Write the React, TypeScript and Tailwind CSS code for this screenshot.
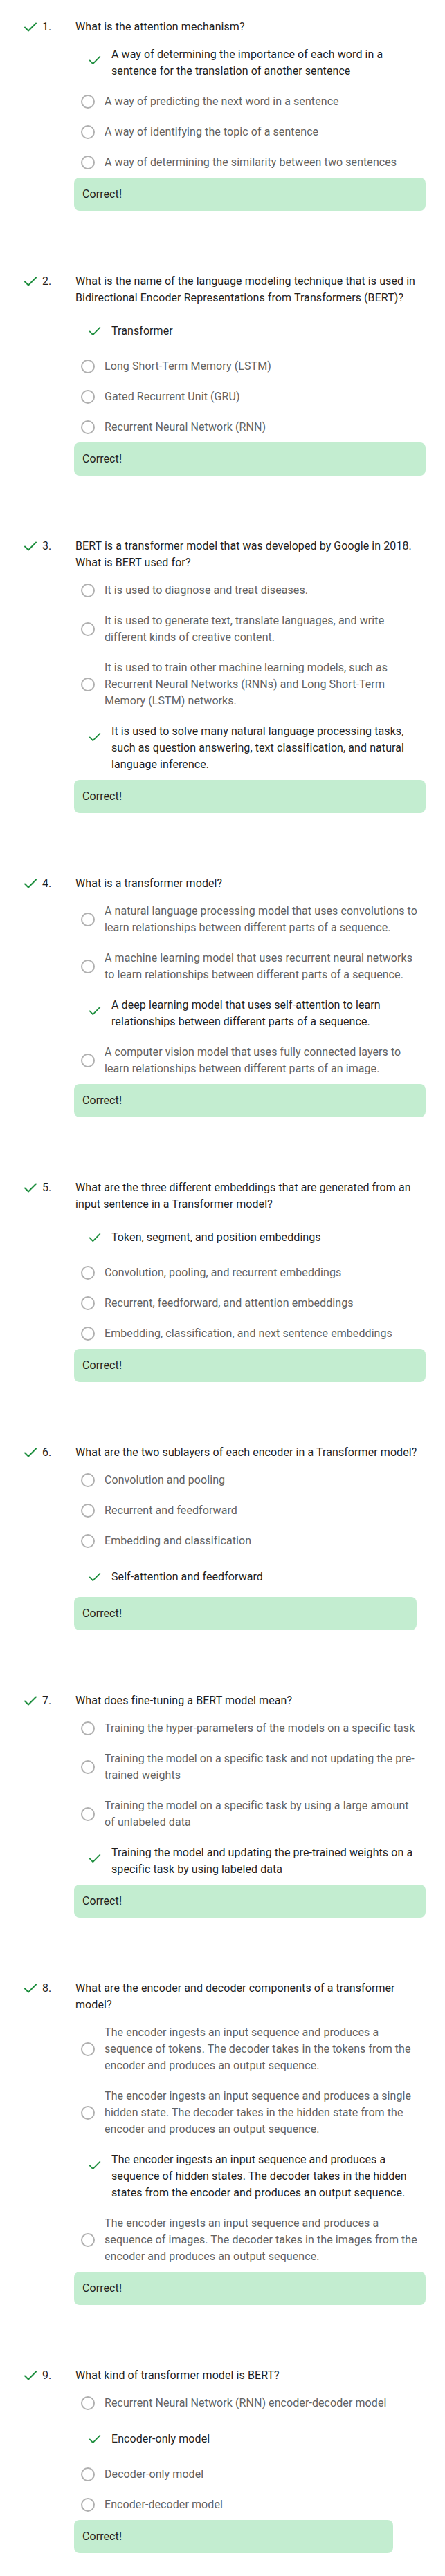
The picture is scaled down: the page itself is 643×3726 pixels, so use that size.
import React from "react";

type Opt = { text: string; correct?: boolean };
type Q = { title: string; options: Opt[] };

const questions: Q[] = [
  {
    title: "What is the attention mechanism?",
    options: [
      { text: "A way of determining the importance of each word in a sentence for the translation of another sentence", correct: true },
      { text: "A way of predicting the next word in a sentence" },
      { text: "A way of identifying the topic of a sentence" },
      { text: "A way of determining the similarity between two sentences" },
    ],
  },
  {
    title: "What is the name of the language modeling technique that is used in Bidirectional Encoder Representations from Transformers (BERT)?",
    options: [
      { text: "Transformer", correct: true },
      { text: "Long Short-Term Memory (LSTM)" },
      { text: "Gated Recurrent Unit (GRU)" },
      { text: "Recurrent Neural Network (RNN)" },
    ],
  },
  {
    title: "BERT is a transformer model that was developed by Google in 2018. What is BERT used for?",
    options: [
      { text: "It is used to diagnose and treat diseases." },
      { text: "It is used to generate text, translate languages, and write different kinds of creative content." },
      { text: "It is used to train other machine learning models, such as Recurrent Neural Networks (RNNs) and Long Short-Term Memory (LSTM) networks." },
      { text: "It is used to solve many natural language processing tasks, such as question answering, text classification, and natural language inference.", correct: true },
    ],
  },
  {
    title: "What is a transformer model?",
    options: [
      { text: "A natural language processing model that uses convolutions to learn relationships between different parts of a sequence." },
      { text: "A machine learning model that uses recurrent neural networks to learn relationships between different parts of a sequence." },
      { text: "A deep learning model that uses self-attention to learn relationships between different parts of a sequence.", correct: true },
      { text: "A computer vision model that uses fully connected layers to learn relationships between different parts of an image." },
    ],
  },
  {
    title: "What are the three different embeddings that are generated from an input sentence in a Transformer model?",
    options: [
      { text: "Token, segment, and position embeddings", correct: true },
      { text: "Convolution, pooling, and recurrent embeddings" },
      { text: "Recurrent, feedforward, and attention embeddings" },
      { text: "Embedding, classification, and next sentence embeddings" },
    ],
  },
  {
    title: "What are the two sublayers of each encoder in a Transformer model?",
    options: [
      { text: "Convolution and pooling" },
      { text: "Recurrent and feedforward" },
      { text: "Embedding and classification" },
      { text: "Self-attention and feedforward", correct: true },
    ],
  },
  {
    title: "What does fine-tuning a BERT model mean?",
    options: [
      { text: "Training the hyper-parameters of the models on a specific task" },
      { text: "Training the model on a specific task and not updating the pre-trained weights" },
      { text: "Training the model on a specific task by using a large amount of unlabeled data" },
      { text: "Training the model and updating the pre-trained weights on a specific task by using labeled data", correct: true },
    ],
  },
  {
    title: "What are the encoder and decoder components of a transformer model?",
    options: [
      { text: "The encoder ingests an input sequence and produces a sequence of tokens. The decoder takes in the tokens from the encoder and produces an output sequence." },
      { text: "The encoder ingests an input sequence and produces a single hidden state. The decoder takes in the hidden state from the encoder and produces an output sequence." },
      { text: "The encoder ingests an input sequence and produces a sequence of hidden states. The decoder takes in the hidden states from the encoder and produces an output sequence.", correct: true },
      { text: "The encoder ingests an input sequence and produces a sequence of images. The decoder takes in the images from the encoder and produces an output sequence." },
    ],
  },
  {
    title: "What kind of transformer model is BERT?",
    options: [
      { text: "Recurrent Neural Network (RNN) encoder-decoder model" },
      { text: "Encoder-only model", correct: true },
      { text: "Decoder-only model" },
      { text: "Encoder-decoder model" },
    ],
  },
];

function Check({ size }: { size: number }) {
  return (
    <svg width={size} height={size} viewBox="0 0 24 24" fill="none" stroke="#1e8e3e" strokeWidth={2} strokeLinecap="round" strokeLinejoin="round">
      <path d="M4 12.5l5 5L20 6.5" />
    </svg>
  );
}

function Option({ opt }: { opt: Opt }) {
  if (opt.correct) {
    return (
      <div className="flex items-start py-[10px] pl-[10px] pr-[10px]">
        <div className="flex h-[39px] w-10 shrink-0 items-center justify-center">
          <Check size={22} />
        </div>
        <div className="ml-1 flex min-h-[39px] items-center text-[16px] leading-6 tracking-[0.08px] text-[#1f1f1f]">
          {opt.text}
        </div>
      </div>
    );
  }
  return (
    <div className="flex items-center py-[10px] pl-[10px] pr-[10px]">
      <div className="h-5 w-5 shrink-0 rounded-full border-2 border-[#b0b0b0] bg-white" />
      <div className="ml-[14px] text-[16px] leading-6 tracking-[0.08px] text-[#636363]">{opt.text}</div>
    </div>
  );
}

export default function App() {
  return (
    <div className="min-h-[3726px] bg-white pt-[27px] pb-[33px] font-['Roboto','Liberation_Sans',sans-serif]">
      {questions.map((q, i) => (
        <div key={i} className={`flex ${i === 0 ? "" : "mt-[90px]"}`}>
          <div className="flex h-6 w-[107px] shrink-0 items-center pl-[32px]">
            <Check size={24} />
            <span className="ml-[5px] text-[16px] leading-6 tracking-[0.08px] text-[#1f1f1f]">{i + 1}.</span>
          </div>
          <div className="flex max-w-[508px] flex-col">
            <div className="pl-[2px] text-[16px] leading-6 tracking-[0.08px] text-[#1f1f1f]">{q.title}</div>
            <div className="mt-[6px] flex flex-col">
              {q.options.map((o, j) => (
                <Option key={j} opt={o} />
              ))}
            </div>
            <div className="flex h-12 items-center rounded-lg bg-[#c3edd0] px-3 text-[16px] leading-6 tracking-[0.08px] text-[#1f1f1f]">
              Correct!
            </div>
          </div>
        </div>
      ))}
    </div>
  );
}
